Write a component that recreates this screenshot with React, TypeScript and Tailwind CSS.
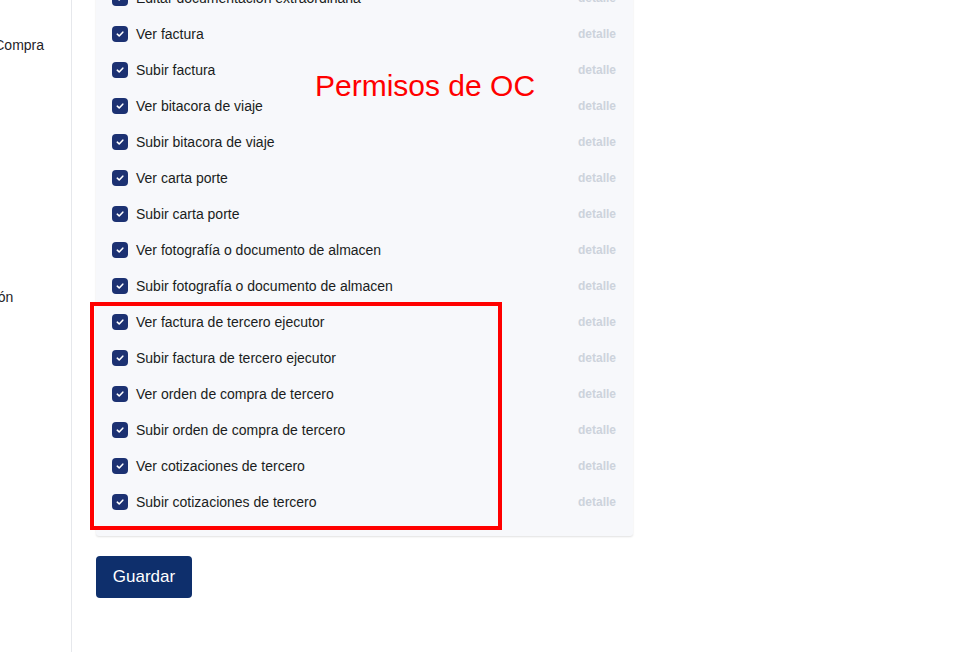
import React from "react";

const rows = [
  "Editar documentación extraordinaria",
  "Ver factura",
  "Subir factura",
  "Ver bitacora de viaje",
  "Subir bitacora de viaje",
  "Ver carta porte",
  "Subir carta porte",
  "Ver fotografía o documento de almacen",
  "Subir fotografía o documento de almacen",
  "Ver factura de tercero ejecutor",
  "Subir factura de tercero ejecutor",
  "Ver orden de compra de tercero",
  "Subir orden de compra de tercero",
  "Ver cotizaciones de tercero",
  "Subir cotizaciones de tercero",
];

function Check() {
  return (
    <span className="flex h-4 w-4 shrink-0 items-center justify-center rounded-[4px] bg-[#1c3172]">
      <svg width="10" height="10" viewBox="0 0 10 10" fill="none">
        <path d="M2.3 5.2 L4.2 7 L7.8 3.2" stroke="white" strokeWidth="1.6" strokeLinecap="round" strokeLinejoin="round" />
      </svg>
    </span>
  );
}

export default function App() {
  return (
    <div
      className="relative flex h-[652px] w-[971px] overflow-hidden bg-white"
      style={{ fontFamily: '"Liberation Sans", Arial, sans-serif' }}
    >
      <aside className="flex h-full w-[72px] shrink-0 flex-col overflow-hidden border-r border-[#e6e8ec] pt-[35px] text-[14px] leading-5 text-[#1f2328]">
        <div className="ml-[-68px] whitespace-nowrap">Orden de Compra</div>
        <div className="ml-[-73px] mt-[232px] whitespace-nowrap">Configuración</div>
      </aside>
      <main className="flex flex-col pl-6">
        <div className="mt-[-36px] w-[537px] rounded-b-[3px] bg-[#f7f8fb] px-4 pb-4 pt-4 shadow-[0_1px_2px_rgba(0,0,0,0.12)]">
          {rows.map((r) => (
            <div key={r} className="flex h-9 items-center">
              <Check />
              <span className="ml-2 flex-1 text-[14px] text-[#1a1d21]">{r}</span>
              <span className="mr-px text-[12px] font-bold text-[#cdd3dc]">detalle</span>
            </div>
          ))}
        </div>
        <div className="mt-5">
          <button className="h-[42px] w-[96px] rounded-[4px] bg-[#0e2f6c] text-[17px] text-white">
            Guardar
          </button>
        </div>
      </main>
      <div className="absolute left-[315px] top-[68px] text-[30px] leading-9 text-[#ff0000]">Permisos de OC</div>
      <div className="absolute left-[90px] top-[302px] h-[228px] w-[412px] border-4 border-[#ff0000]" />
    </div>
  );
}
